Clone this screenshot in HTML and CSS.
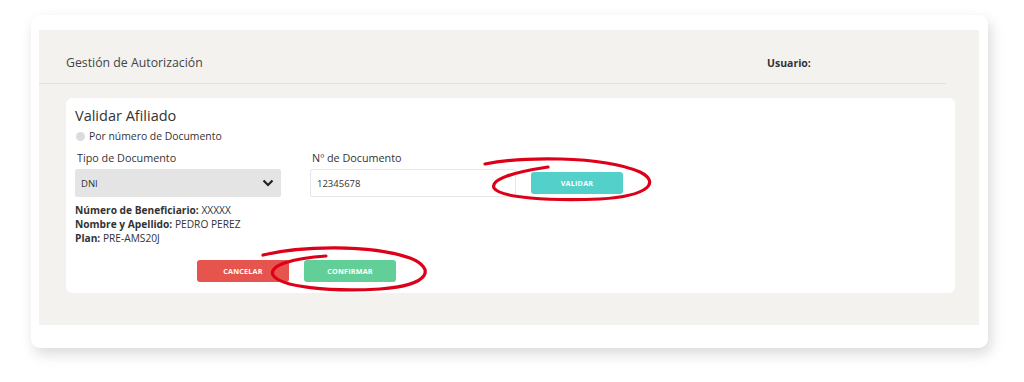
FILE: index.html
```html
<!DOCTYPE html>
<html lang="es">
<head>
    <meta charset="UTF-8">
    <meta name="viewport" content="width=device-width, initial-scale=1.0">
    <title>Gestión de Autorización</title>
    <link rel="stylesheet" href="styles.css">
</head>
<body>
    <div class="page">
        <div class="frame">
            <div class="panel">
                <div class="panel-header">
                    <span class="panel-title">Gestión de Autorización</span>
                    <span class="user">Usuario:</span>
                </div>

                <div class="card">
                    <h1>Validar Afiliado</h1>
                    <label class="radio"><span class="dot"></span>Por número de Documento</label>

                    <div class="fields">
                        <div class="field">
                            <label for="tipo">Tipo de Documento</label>
                            <div class="select" id="tipo">
                                <span>DNI</span>
                                <svg width="12" height="8" viewBox="0 0 12 8"><path d="M1.5 1.5 L6 6 L10.5 1.5" fill="none" stroke="#222" stroke-width="2.2"/></svg>
                            </div>
                        </div>
                        <div class="field">
                            <label for="numero">Nº de Documento</label>
                            <div class="doc-row">
                                <input type="text" id="numero" value="12345678" />
                                <button class="btn btn-teal">VALIDAR</button>
                            </div>
                        </div>
                    </div>

                    <div class="info">
                        <p><b>Número de Beneficiario:</b> XXXXX</p>
                        <p><b>Nombre y Apellido:</b> PEDRO PEREZ</p>
                        <p><b>Plan:</b> PRE-AMS20J</p>
                    </div>

                    <div class="actions">
                        <button class="btn btn-red">CANCELAR</button>
                        <button class="btn btn-green">CONFIRMAR</button>
                    </div>
                </div>
            </div>
        </div>

        <!-- marcas a mano sobre la captura -->
        <svg class="marks" width="1024" height="382" viewBox="0 0 1024 382">
            <path d="M485 164 C520 157 600 155 640 172 C660 182 650 196 600 199 C550 201 500 198 494 188 C490 179 515 172 548 167" />
            <path d="M263 255 C300 246 370 244 410 258 C435 268 432 285 380 289 C330 292 280 287 273 275 C268 265 295 258 326 256" />
        </svg>
    </div>
</body>
</html>
```

FILE: styles.css
```css
body {
    margin: 0;
    background: #fff;
    font-family: "Open Sans", Arial, sans-serif;
    color: #333;
}

.page {
    position: relative;
    width: 1024px;
    height: 382px;
    padding: 15px 0 0 31px;
    box-sizing: border-box;
}

/* white card with soft shadow */
.frame {
    width: 957px;
    height: 333px;
    box-sizing: border-box;
    padding: 15px 9px 23px 8px;
    background: #fff;
    border-radius: 9px;
    box-shadow: 3px 6px 14px rgba(0, 0, 0, 0.15);
}

.panel {
    height: 100%;
    background: #f3f2ef;
    display: flex;
    flex-direction: column;
    padding-bottom: 32px;
    box-sizing: border-box;
}

.panel-header {
    display: flex;
    align-items: center;
    height: 54px;
    padding: 12px 0 0 27px;
    margin-right: 33px;
    box-sizing: border-box;
    border-bottom: 1px solid #e2e1dd;
    font-size: 12.3px;
    color: #444;
}

.panel-title {
    flex: 1;
}

.user {
    width: 179px;
    font-weight: bold;
    font-size: 10.5px;
    color: #333;
}

.card {
    flex: 1;
    background: #fff;
    border-radius: 6px;
    margin: 14px 24px 0 27px;
    padding: 8px 9px 11px;
    display: flex;
    flex-direction: column;
}

h1 {
    margin: 0;
    font-size: 14.5px;
    font-weight: normal;
    line-height: 20px;
    color: #333;
}

.radio {
    display: flex;
    align-items: center;
    margin-top: 3px;
    font-size: 10.4px;
    line-height: 14px;
    color: #333;
}

.dot {
    width: 9px;
    height: 9px;
    border-radius: 50%;
    background: #dcdcdc;
    margin: 0 4px 0 1px;
}

.fields {
    display: flex;
    gap: 29px;
    margin-top: 9px;
}

.field label {
    display: block;
    font-size: 10.8px;
    line-height: 12px;
    margin: 0 0 5px 2px;
    color: #333;
}

.select {
    width: 206px;
    height: 28px;
    box-sizing: border-box;
    background: #e4e4e4;
    border-radius: 2px;
    display: flex;
    align-items: center;
    justify-content: space-between;
    padding: 0 7px 0 6px;
    font-size: 9.5px;
    color: #333;
}

.doc-row {
    display: flex;
    align-items: center;
    gap: 15px;
}

.doc-row input {
    width: 206px;
    height: 28px;
    box-sizing: border-box;
    border: 1px solid #e6e6e6;
    border-radius: 2px;
    padding: 0 6px;
    font-family: inherit;
    font-size: 9.5px;
    color: #333;
}

.btn {
    width: 92px;
    height: 22px;
    border: none;
    border-radius: 3px;
    color: #fff;
    font-family: inherit;
    font-weight: bold;
    font-size: 7.2px;
    letter-spacing: 0.2px;
}

.btn-teal { background: #52d0c9; }
.btn-red { background: #e5544d; }
.btn-green { background: #63cf98; }

.info {
    margin-top: 6px;
    font-size: 10.2px;
    line-height: 14px;
}

.info p {
    margin: 0;
}

.actions {
    display: flex;
    gap: 15px;
    margin: 15px 0 0 122px;
}

.marks {
    position: absolute;
    left: 0;
    top: 0;
    pointer-events: none;
}

.marks path {
    fill: none;
    stroke: #dc0018;
    stroke-width: 3.2;
    stroke-linecap: round;
}
```
